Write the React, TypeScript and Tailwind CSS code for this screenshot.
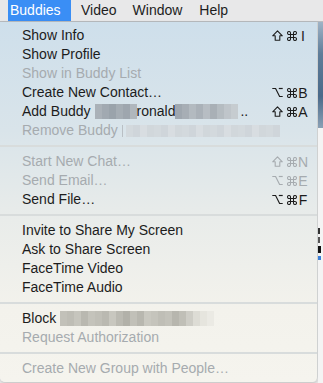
import React from "react";

const FONT = { fontFamily: '"Liberation Sans", Arial, sans-serif' };

type Item = {
  label: string;
  disabled?: boolean;
  mod?: "shift" | "opt";
  key?: string;
  extra?: React.ReactNode;
};

function Pix({ cells, h }: { cells: string[]; h: string }) {
  return (
    <span className={`inline-flex ${h} overflow-hidden`}>
      {cells.map((c, i) => (
        <span key={i} className={`${c} w-[7px] h-full shrink-0`} />
      ))}
    </span>
  );
}

function ShiftIcon() {
  return (
    <svg width="11" height="11" viewBox="0 0 11 11" fill="none" stroke="currentColor" strokeWidth="1.1" strokeLinejoin="round">
      <path d="M5.5 0.8 L10.3 5.8 H7.8 V10.3 H3.2 V5.8 H0.7 Z" />
    </svg>
  );
}

function OptIcon() {
  return (
    <svg width="11" height="11" viewBox="0 0 11 11" fill="none" stroke="currentColor" strokeWidth="1.2">
      <path d="M0.3 1.5 H3.6 L7.6 9.5 H10.7" />
      <path d="M6.8 1.5 H10.7" />
    </svg>
  );
}

function CmdIcon() {
  return (
    <svg width="10" height="10" viewBox="0 0 10 10" fill="none" stroke="currentColor" strokeWidth="1.05">
      <path d="M3.5 3.5V2a1.5 1.5 0 1 0-1.5 1.5h6a1.5 1.5 0 1 0-1.5-1.5v6a1.5 1.5 0 1 0 1.5-1.5h-6a1.5 1.5 0 1 0 1.5 1.5z" />
    </svg>
  );
}

const addBlur1 = ["bg-[#aab1b8]", "bg-[#a1a9b1]", "bg-[#9aa3ab]", "bg-[#a5adb4]", "bg-[#9ea6ae]", "bg-[#b0b7bd]"];
const addBlur2 = ["bg-[#9fa7af]", "bg-[#a7aeb5]", "bg-[#b3bac0]", "bg-[#aab1b8]", "bg-[#b7bdc3]", "bg-[#a9b0b6]", "bg-[#b5bcc1]", "bg-[#bfc5ca]", "bg-[#c6ccd0]"];
const remBlur = Array.from({ length: 22 }).map((_, i) =>
  ["bg-[#d3d9dd]", "bg-[#cfd5da]", "bg-[#d8dde1]", "bg-[#d1d7db]"][i % 4]
);
const blockBlur = [
  "bg-[#c2c1b9]", "bg-[#bebdb5]", "bg-[#c6c5bd]", "bg-[#b9b8b0]", "bg-[#c4c3bb]", "bg-[#c0bfb7]",
  "bg-[#bab9b1]", "bg-[#c8c7bf]", "bg-[#bbbab2]", "bg-[#b2b1a9]", "bg-[#c1c0b8]", "bg-[#b8b7af]",
  "bg-[#c9c8c0]", "bg-[#c5c4bc]", "bg-[#bfbeb6]", "bg-[#c3c2ba]", "bg-[#b7b6ae]", "bg-[#c0bfb7]",
  "bg-[#cecdc6]", "bg-[#dddcd5]", "bg-[#e6e5de]", "bg-[#ebeae4]",
];

const groups: Item[][] = [
  [
    { label: "Show Info", mod: "shift", key: "I" },
    { label: "Show Profile" },
    { label: "Show in Buddy List", disabled: true },
    { label: "Create New Contact…", mod: "opt", key: "B" },
    {
      label: "Add Buddy",
      mod: "shift",
      key: "A",
      extra: (
        <span className="inline-flex items-center ml-[4px]">
          <Pix cells={addBlur1} h="h-[15px]" />
          <span>ronald</span>
          <Pix cells={addBlur2} h="h-[15px]" />
          <span className="ml-[2px]">..</span>
        </span>
      ),
    },
    {
      label: "Remove Buddy",
      disabled: true,
      extra: (
        <span className="inline-flex items-center ml-[4px]">
          <span className="w-[1px] h-[12px] bg-[#b9bfc4] mr-[3px]" />
          <Pix cells={remBlur} h="h-[12px]" />
        </span>
      ),
    },
  ],
  [
    { label: "Start New Chat…", disabled: true, mod: "shift", key: "N" },
    { label: "Send Email…", disabled: true, mod: "opt", key: "E" },
    { label: "Send File…", mod: "opt", key: "F" },
  ],
  [
    { label: "Invite to Share My Screen" },
    { label: "Ask to Share Screen" },
    { label: "FaceTime Video" },
    { label: "FaceTime Audio" },
  ],
  [
    {
      label: "Block",
      extra: (
        <span className="inline-flex items-center ml-[4px]">
          <Pix cells={blockBlur} h="h-[15px]" />
        </span>
      ),
    },
    { label: "Request Authorization", disabled: true },
  ],
  [{ label: "Create New Group with People…", disabled: true }],
];

function Row({ item }: { item: Item }) {
  const color = item.disabled ? "text-[#a6abaf]" : "text-[#1c1c1c]";
  return (
    <div className={`h-[19px] flex items-center justify-between pl-[22px] pr-[8px] text-[14px] ${color}`}>
      <span className="inline-flex items-center whitespace-nowrap">
        <span>{item.label}</span>
        {item.extra}
      </span>
      {item.key && (
        <span className="inline-flex items-center">
          <span className="w-[15px] flex items-center">
            {item.mod === "shift" ? <ShiftIcon /> : <OptIcon />}
          </span>
          <span className="w-[10px] flex items-center">
            <CmdIcon />
          </span>
          <span className="w-[12px] text-center leading-none">{item.key}</span>
        </span>
      )}
    </div>
  );
}

export default function App() {
  return (
    <div style={FONT} className="w-[323px] h-[383px] overflow-hidden bg-[#f1f1f1] flex flex-col">
      <div className="h-[22px] shrink-0 flex items-center bg-[#e8e8e9] border-b border-[#b9bcbf] text-[14px] text-[#1d1d1d]">
        <div className="ml-[8px] h-full px-[2px] w-[63px] bg-[#3a8ef5] text-white flex items-center">Buddies</div>
        <span className="ml-[10px]">Video</span>
        <span className="ml-[16px]">Window</span>
        <span className="ml-[17px]">Help</span>
      </div>
      <div className="flex flex-1 min-h-0">
        <div className="w-[318px] shrink-0 rounded-b-[5px] bg-[linear-gradient(180deg,#cedfeb_0%,#d9e4ea_30%,#e9ecea_55%,#f3f2ec_80%,#f5f4ee_100%)] pt-[4px] pb-[4px] border-r border-[#cfd1d1] shadow-[0_2px_4px_rgba(0,0,0,0.2)] self-start">
          {groups.map((g, gi) => (
            <div key={gi}>
              {gi > 0 && (
                <div className="h-[12px] flex items-center">
                  <div className="w-full h-[2px] bg-[#d8dcdc]" />
                </div>
              )}
              {g.map((it, i) => (
                <Row key={i} item={it} />
              ))}
            </div>
          ))}
        </div>
        <div className="flex-1 flex flex-col">
          <div className="h-[106px] bg-[linear-gradient(180deg,#9fb3c6,#5f7d99_30%,#4a6a8a_70%,#8aa0b5)]" />
          <div className="flex-1 bg-[#f4f4f4] flex flex-col pt-[100px] gap-[3px]">
            <div className="h-[6px] w-[2px] bg-[#333]" />
            <div className="h-[6px] w-[2px] bg-[#555]" />
            <div className="h-[7px] w-[3px] bg-[#111]" />
            <div className="h-[4px] w-[3px] bg-[#3b7fd9]" />
          </div>
        </div>
      </div>
    </div>
  );
}
